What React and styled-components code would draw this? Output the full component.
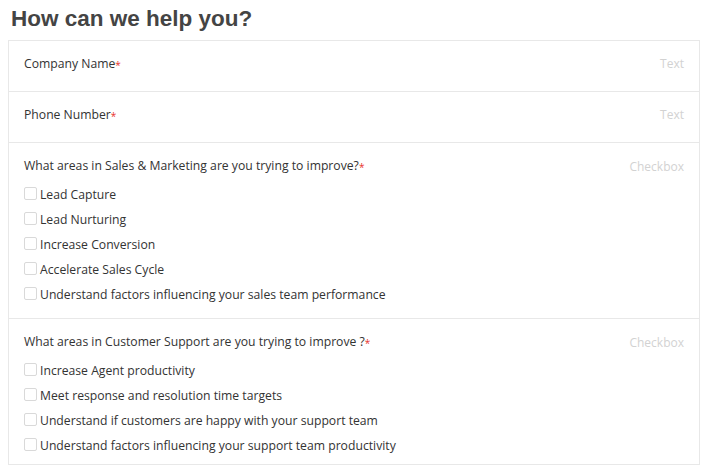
import React from "react";
import styled, { createGlobalStyle } from "styled-components";

const fields = [
  { label: "Company Name", type: "Text" },
  { label: "Phone Number", type: "Text" },
  {
    label: "What areas in Sales & Marketing are you trying to improve?",
    type: "Checkbox",
    options: [
      "Lead Capture",
      "Lead Nurturing",
      "Increase Conversion",
      "Accelerate Sales Cycle",
      "Understand factors influencing your sales team performance",
    ],
  },
  {
    label: "What areas in Customer Support are you trying to improve ?",
    type: "Checkbox",
    last: true,
    options: [
      "Increase Agent productivity",
      "Meet response and resolution time targets",
      "Understand if customers are happy with your support team",
      "Understand factors influencing your support team productivity",
    ],
  },
];

// checkbox groups tighten at the bottom, the last one most
const padding = (field) => {
  if (!field.options) return "13px 15px 17px";
  return field.last ? "13px 15px 6px" : "13px 15px 11px";
};

function App() {
  return (
    <>
      <GlobalStyle />
      <Title>How can we help you?</Title>
      <Form>
        {fields.map((field, index) => (
          <Field key={index} $pad={padding(field)} $last={field.last}>
            <FieldHead>
              <Label>
                {field.label}
                <Required>*</Required>
              </Label>
              <Type $up={!field.options}>{field.type}</Type>
            </FieldHead>
            {field.options && (
              <Options>
                {field.options.map((option, i) => (
                  <Option key={i}>
                    <Box />
                    {option}
                  </Option>
                ))}
              </Options>
            )}
          </Field>
        ))}
      </Form>
    </>
  );
}

export default App;

const GlobalStyle = createGlobalStyle`
  body {
    margin: 8px;
    background: #fff;
    font-family: "Open Sans", "Liberation Sans", sans-serif;
    color: #333;
  }
`;

const Title = styled.h2`
  margin: 0;
  height: 32px;
  padding-left: 3px;
  font-family: "Liberation Sans", Arial, sans-serif;
  font-size: 22.5px;
  font-weight: bold;
  line-height: 22px;
  color: #444;
`;

const Form = styled.div`
  border: 1px solid #e8e8e8;
`;

const Field = styled.div`
  padding: ${(props) => props.$pad};
  border-bottom: ${(props) => (props.$last ? "none" : "1px solid #e8e8e8")};
`;

const FieldHead = styled.div`
  display: flex;
  justify-content: space-between;
  align-items: center;
  height: 20px;
`;

const Label = styled.div`
  font-size: 12.2px;
  line-height: 20px;
  color: #333;
`;

const Required = styled.span`
  color: #e8322c;
  font-size: 10px;
  position: relative;
  top: 1px;
`;

const Type = styled.div`
  font-size: 12px;
  color: #d2d2d2;
  margin-top: ${(props) => (props.$up ? "-2px" : "0")};
`;

const Options = styled.div`
  display: flex;
  flex-direction: column;
  margin-top: 6px;
`;

const Option = styled.div`
  display: flex;
  align-items: center;
  height: 25px;
  font-size: 12.2px;
  color: #333;
`;

const Box = styled.span`
  width: 13px;
  height: 13px;
  box-sizing: border-box;
  border: 1px solid #d9d9d9;
  border-radius: 2px;
  margin-right: 3px;
  position: relative;
  top: -1px;
`;
